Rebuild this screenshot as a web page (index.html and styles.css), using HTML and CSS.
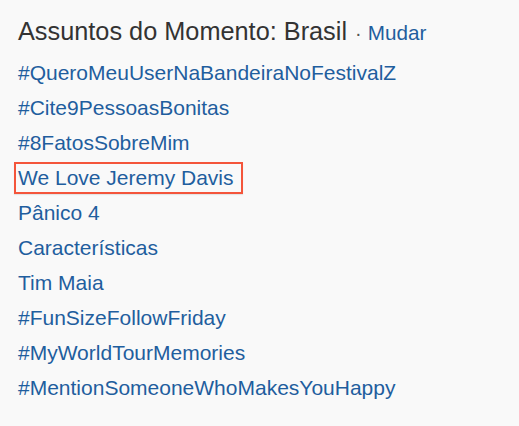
FILE: index.html
```html
<!DOCTYPE html>
<html lang="pt-BR">
<head>
<meta charset="utf-8">
<title>Assuntos do Momento</title>
<link rel="stylesheet" href="styles.css">
</head>
<body>
<section class="trends">
  <header class="trends-header">
    <h2 class="trends-title">Assuntos do Momento: Brasil</h2>
    <span class="sep">·</span>
    <a class="change" href="#">Mudar</a>
  </header>
  <ul class="trend-list">
    <li><a href="#">#QueroMeuUserNaBandeiraNoFestivalZ</a></li>
    <li><a href="#">#Cite9PessoasBonitas</a></li>
    <li><a href="#">#8FatosSobreMim</a></li>
    <li class="highlight"><a href="#">We Love Jeremy Davis</a></li>
    <li><a href="#">Pânico 4</a></li>
    <li><a href="#">Características</a></li>
    <li><a href="#">Tim Maia</a></li>
    <li><a href="#">#FunSizeFollowFriday</a></li>
    <li><a href="#">#MyWorldTourMemories</a></li>
    <li><a href="#">#MentionSomeoneWhoMakesYouHappy</a></li>
  </ul>
</section>
</body>
</html>
```
FILE: styles.css
```css
html, body {
  margin: 0;
  padding: 0;
  background: #f9f9f9;
}
body {
  font-family: "Liberation Sans", Arial, Helvetica, sans-serif;
}
.trends {
  padding: 16px 0 0 18px;
}
.trends-header {
  display: flex;
  align-items: baseline;
  height: 30px;
  line-height: 30px;
}
.trends-title {
  margin: 0;
  font-size: 25.3px;
  font-weight: normal;
  color: #333333;
}
.sep {
  font-size: 20px;
  color: #555555;
  margin: 0 6px 0 8px;
}
.change {
  font-size: 20.7px;
  color: #1f5e9e;
  text-decoration: none;
}
.trend-list {
  list-style: none;
  margin: 9px 0 0 0;
  padding: 0;
}
.trend-list li {
  font-size: 21px;
  line-height: 35px;
  height: 35px;
  position: relative;
}
.trend-list a {
  color: #1f5e9e;
  text-decoration: none;
}
.highlight::before {
  content: "";
  position: absolute;
  left: -4px;
  top: 2px;
  width: 225px;
  height: 28px;
  border: 2.5px solid #f4553b;
  box-shadow: 0 1px 1px rgba(0, 0, 0, 0.08);
  pointer-events: none;
}
```
